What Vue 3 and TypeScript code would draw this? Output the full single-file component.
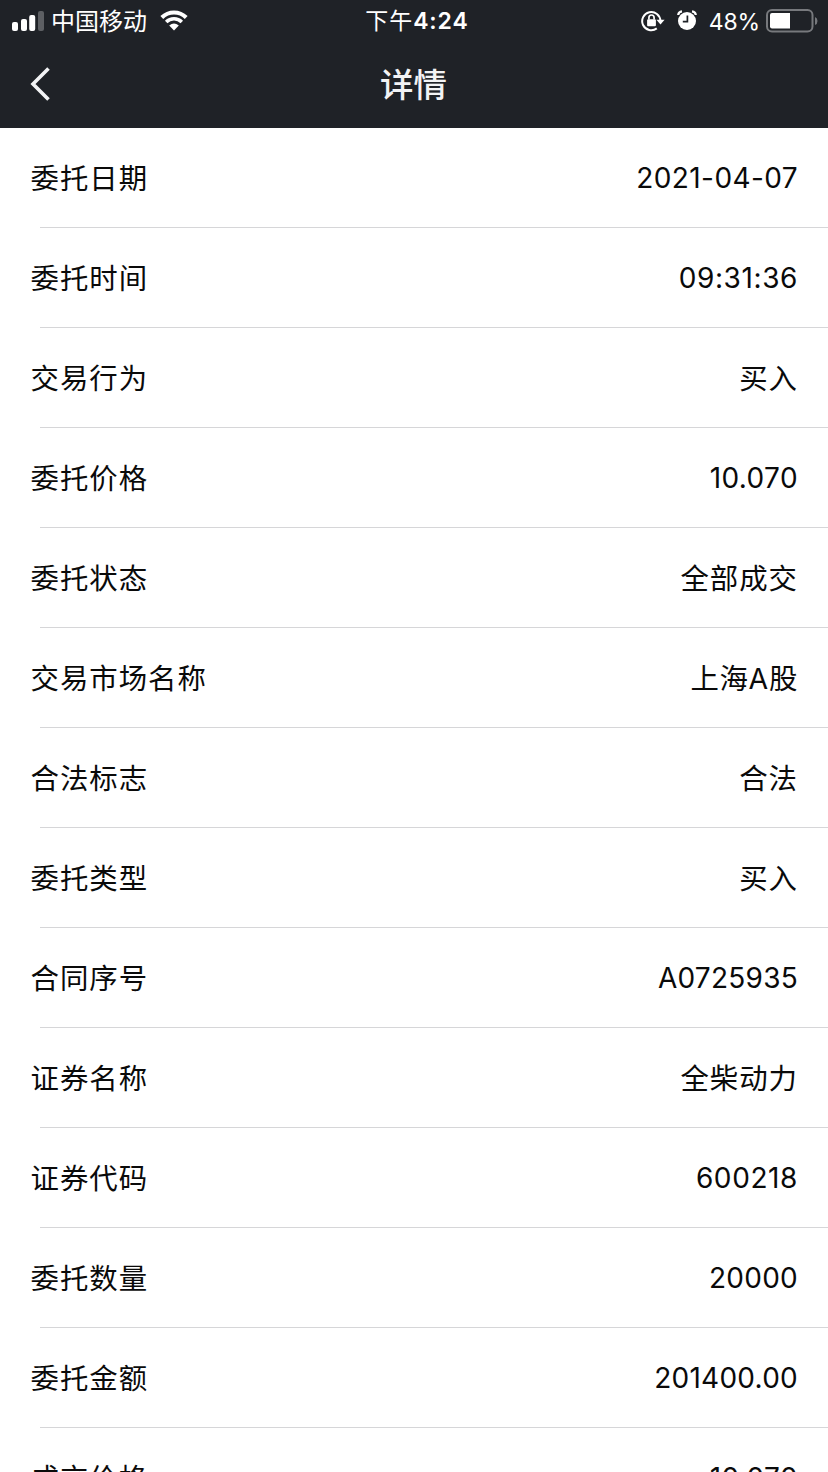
<script setup lang="ts">
interface DetailRow {
  label: string
  value: string
  kind?: 'latin' | 'latin wide' | 'latin wider' | 'mixed'
}

const rows: DetailRow[] = [
  { label: '委托日期', value: '2021-04-07', kind: 'latin wide' },
  { label: '委托时间', value: '09:31:36', kind: 'latin wider' },
  { label: '交易行为', value: '买入' },
  { label: '委托价格', value: '10.070', kind: 'latin wide' },
  { label: '委托状态', value: '全部成交' },
  { label: '交易市场名称', value: '上海A股', kind: 'mixed' },
  { label: '合法标志', value: '合法' },
  { label: '委托类型', value: '买入' },
  { label: '合同序号', value: 'A0725935', kind: 'latin' },
  { label: '证券名称', value: '全柴动力' },
  { label: '证券代码', value: '600218', kind: 'latin wider' },
  { label: '委托数量', value: '20000', kind: 'latin' },
  { label: '委托金额', value: '201400.00', kind: 'latin' },
  { label: '成交价格', value: '10.070', kind: 'latin wide' },
]
</script>

<template>
  <div class="screen">
    <header class="top">
      <div class="status">
        <div class="side">
          <svg class="signal" width="32" height="20" viewBox="0 0 32 20">
            <rect x="0" y="11" width="6" height="9" rx="2" fill="#fff" />
            <rect x="9" y="8" width="6" height="12" rx="2" fill="#fff" />
            <rect x="17.2" y="4" width="6" height="16" rx="2" fill="#fff" />
            <rect x="26" y="0" width="6" height="20" rx="2" fill="#5d5f63" />
          </svg>
          <span class="carrier">中国移动</span>
          <svg class="wifi" width="28" height="21" viewBox="0 0 28 21">
            <path d="M1.8 7.5 A17.3 17.3 0 0 1 26.2 7.5" fill="none" stroke="#fff" stroke-width="4" />
            <path d="M6.2 12.1 A11 11 0 0 1 21.8 12.1" fill="none" stroke="#fff" stroke-width="3.5" />
            <path d="M9.2 15.5 Q14 11.6 18.8 15.5 L14 20.5 Z" fill="#fff" />
          </svg>
        </div>
        <div class="clock"><span class="meridiem">下午</span>4:24</div>
        <div class="side right">
          <svg class="lock" width="24" height="22" viewBox="0 0 24 22">
            <path d="M15.8 18.4 A9.1 9.1 0 1 1 19.4 11" fill="none" stroke="#fff" stroke-width="2" />
            <path d="M15.4 9.8 H23.6 L19.5 14.5 Z" fill="#fff" />
            <rect x="6.1" y="9.2" width="8.8" height="7" rx="1" fill="#fff" />
            <path d="M7.9 9.5 V7.8 A2.6 2.8 0 0 1 13.1 7.8 V9.5" fill="none" stroke="#fff" stroke-width="1.7" />
          </svg>
          <svg class="alarm" width="20" height="21" viewBox="0 0 20 21">
            <circle cx="10" cy="11" r="9" fill="#fff" />
            <path d="M1.2 5 Q1.5 1.8 5 1.3 M18.8 5 Q18.5 1.8 15 1.3" fill="none" stroke="#fff" stroke-width="2.2" />
            <path d="M10.4 5.4 V11.7 H5.8" fill="none" stroke="#1f2227" stroke-width="1.7" />
          </svg>
          <span class="percent">48%</span>
          <svg class="battery" width="52" height="24" viewBox="0 0 52 24">
            <rect x="1" y="1" width="45.5" height="21.5" rx="5" fill="none" stroke="#77797d" stroke-width="2" />
            <path d="M6 4 H24 V19.5 H6 Q4 19.5 4 17.5 V6 Q4 4 6 4 Z" fill="#fff" />
            <path d="M49 8 Q51.5 9 51.5 12 Q51.5 15 49 16 Z" fill="#77797d" />
          </svg>
        </div>
      </div>
      <div class="nav">
        <svg class="back" width="20" height="34" viewBox="0 0 20 34">
          <path d="M18.5 1.5 L3 17 L18.5 32.5" fill="none" stroke="#f2f3f5" stroke-width="3.6" />
        </svg>
        <h1 class="title">详情</h1>
        <span class="spacer"></span>
      </div>
    </header>
    <main class="list">
      <div v-for="(row, i) in rows" :key="i" class="row">
        <span class="label">{{ row.label }}</span>
        <span class="value" :class="row.kind">{{ row.value }}</span>
      </div>
    </main>
  </div>
</template>

<style>
body {
  margin: 0;
  background: #fff;
}
</style>

<style scoped>
.screen {
  width: 828px;
  height: 1472px;
  overflow: hidden;
  background: #fff;
  font-family: Inter, "Noto Sans CJK SC", sans-serif;
  color: #0a0a0a;
}
.top {
  height: 128px;
  background: #1f2227;
  color: #fff;
}
.status {
  display: grid;
  grid-template-columns: 1fr auto 1fr;
  align-items: center;
  height: 41px;
  padding: 0 10px 0 12px;
}
.side {
  display: flex;
  align-items: center;
}
.right {
  justify-content: flex-end;
}
.carrier {
  margin-left: 7px;
  padding-top: 2px;
  font-size: 24px;
  line-height: 38px;
}
.wifi {
  margin-left: 13px;
}
.clock {
  padding: 1px 0 0 4px;
  font-size: 23px;
  font-weight: 600;
  line-height: 40px;
  letter-spacing: 0.9px;
}
.meridiem {
  font-weight: 400;
}
.alarm {
  margin-left: 12px;
}
.percent {
  margin-left: 12px;
  padding-top: 2px;
  font-size: 23px;
  line-height: 38px;
  letter-spacing: -0.1px;
}
.battery {
  margin-left: 6px;
}
.nav {
  display: grid;
  grid-template-columns: 1fr auto 1fr;
  align-items: center;
  height: 87px;
  padding: 0 30px;
}
.back {
  margin-top: -2px;
}
.title {
  margin: 0 1px 0 0;
  padding-top: 1px;
  font-size: 33.5px;
  font-weight: 500;
  line-height: 86px;
  color: #f2f3f5;
}
.row {
  display: flex;
  justify-content: space-between;
  box-sizing: border-box;
  height: 100px;
  padding: 0 30px;
  font-size: 28.4px;
  line-height: 102px;
  letter-spacing: 1px;
  background: linear-gradient(#d6d6d8, #d6d6d8) 40px 99px / 788px 1px no-repeat;
}
.label {
  padding-left: 0.5px;
}
.value {
  text-align: right;
}
.mixed {
  letter-spacing: 0.7px;
}
.latin {
  font-size: 28px;
  line-height: 100px;
  letter-spacing: 0.25px;
}
.wide {
  letter-spacing: 0.4px;
}
.wider {
  letter-spacing: 0.6px;
}
</style>
